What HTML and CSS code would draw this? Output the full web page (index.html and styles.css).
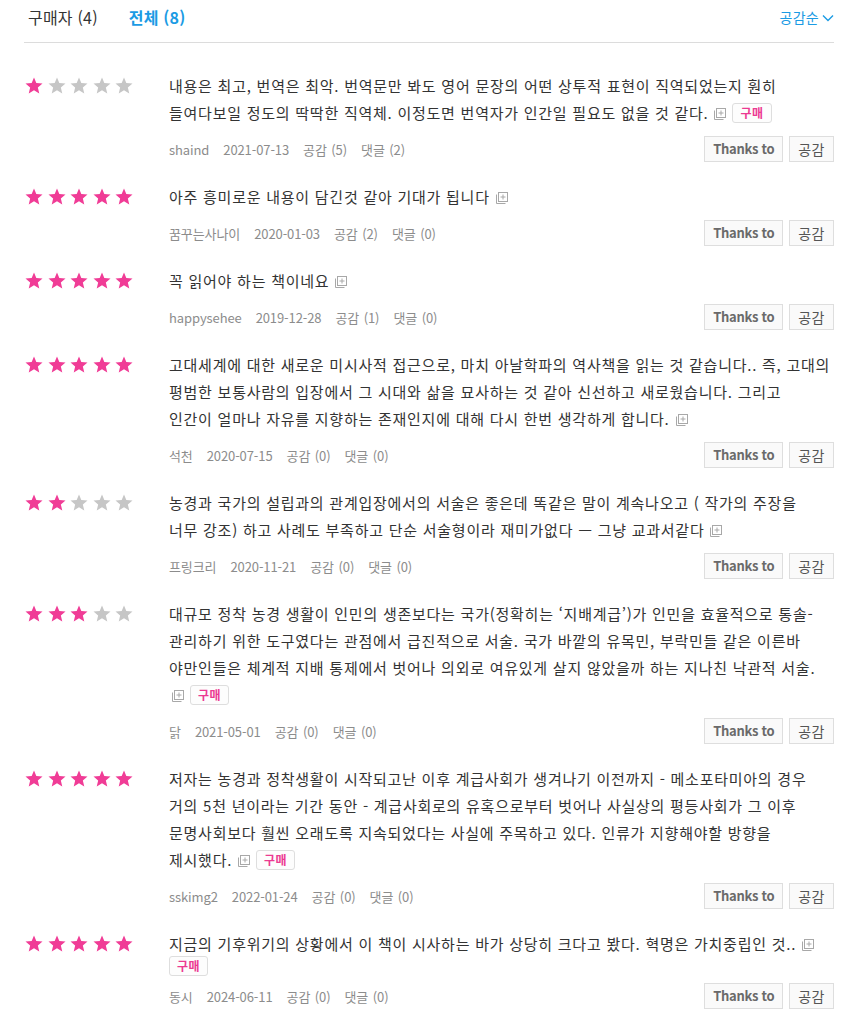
FILE: index.html
```html
<!DOCTYPE html>
<html lang="ko">
<head>
<meta charset="utf-8">
<link rel="stylesheet" href="styles.css">
</head>
<body>
<svg width="0" height="0" class="defs">
  <defs>
    <symbol id="star" viewBox="0 0 20 19">
      <path d="M10 0.5 L12.6 6.6 L19.5 7.2 L14.3 11.7 L15.9 18.4 L10 14.9 L4.1 18.4 L5.7 11.7 L0.5 7.2 L7.4 6.6 Z"/>
    </symbol>
    <symbol id="more" viewBox="0 0 12 12">
      <rect x="2.5" y="0.5" width="9" height="9" fill="#fff" stroke="#a8a8a8"/>
      <path d="M0.5 2.5 V11.5 H9.5" fill="none" stroke="#a8a8a8"/>
      <path d="M7 2.5 V7.5 M4.5 5 H9.5" stroke="#a8a8a8"/>
    </symbol>
  </defs>
</svg>
<div class="page">
  <div class="tabs">
    <div class="tab-group">
      <span class="tab">구매자 (4)</span>
      <span class="tab active">전체 (8)</span>
    </div>
    <span class="sort">공감순 <svg class="chev" viewBox="0 0 12 8"><path d="M1 1.5 L6 6.5 L11 1.5" fill="none" stroke="currentColor" stroke-width="1.4"/></svg></span>
  </div>

  <div class="list">
    <div class="review">
      <div class="stars"><svg class="on"><use href="#star"/></svg><svg><use href="#star"/></svg><svg><use href="#star"/></svg><svg><use href="#star"/></svg><svg><use href="#star"/></svg></div>
      <div class="body">
        <p class="text">내용은 최고, 번역은 최악. 번역문만 봐도 영어 문장의 어떤 상투적 표현이 직역되었는지 훤히<br>들여다보일 정도의 딱딱한 직역체. 이정도면 번역자가 인간일 필요도 없을 것 같다. <svg class="more"><use href="#more"/></svg> <span class="badge">구매</span></p>
        <div class="meta">
          <div class="info"><span>shaind</span><span>2021-07-13</span><span>공감 (5)</span><span>댓글 (2)</span></div>
          <div class="btns"><button class="btn">Thanks to</button><button class="btn btn-like">공감</button></div>
        </div>
      </div>
    </div>

    <div class="review">
      <div class="stars"><svg class="on"><use href="#star"/></svg><svg class="on"><use href="#star"/></svg><svg class="on"><use href="#star"/></svg><svg class="on"><use href="#star"/></svg><svg class="on"><use href="#star"/></svg></div>
      <div class="body">
        <p class="text">아주 흥미로운 내용이 담긴것 같아 기대가 됩니다 <svg class="more"><use href="#more"/></svg></p>
        <div class="meta">
          <div class="info"><span>꿈꾸는사나이</span><span>2020-01-03</span><span>공감 (2)</span><span>댓글 (0)</span></div>
          <div class="btns"><button class="btn">Thanks to</button><button class="btn btn-like">공감</button></div>
        </div>
      </div>
    </div>

    <div class="review">
      <div class="stars"><svg class="on"><use href="#star"/></svg><svg class="on"><use href="#star"/></svg><svg class="on"><use href="#star"/></svg><svg class="on"><use href="#star"/></svg><svg class="on"><use href="#star"/></svg></div>
      <div class="body">
        <p class="text">꼭 읽어야 하는 책이네요 <svg class="more"><use href="#more"/></svg></p>
        <div class="meta">
          <div class="info"><span>happysehee</span><span>2019-12-28</span><span>공감 (1)</span><span>댓글 (0)</span></div>
          <div class="btns"><button class="btn">Thanks to</button><button class="btn btn-like">공감</button></div>
        </div>
      </div>
    </div>

    <div class="review">
      <div class="stars"><svg class="on"><use href="#star"/></svg><svg class="on"><use href="#star"/></svg><svg class="on"><use href="#star"/></svg><svg class="on"><use href="#star"/></svg><svg class="on"><use href="#star"/></svg></div>
      <div class="body">
        <p class="text">고대세계에 대한 새로운 미시사적 접근으로, 마치 아날학파의 역사책을 읽는 것 같습니다.. 즉, 고대의<br>평범한 보통사람의 입장에서 그 시대와 삶을 묘사하는 것 같아 신선하고 새로웠습니다. 그리고<br>인간이 얼마나 자유를 지향하는 존재인지에 대해 다시 한번 생각하게 합니다. <svg class="more"><use href="#more"/></svg></p>
        <div class="meta">
          <div class="info"><span>석천</span><span>2020-07-15</span><span>공감 (0)</span><span>댓글 (0)</span></div>
          <div class="btns"><button class="btn">Thanks to</button><button class="btn btn-like">공감</button></div>
        </div>
      </div>
    </div>

    <div class="review">
      <div class="stars"><svg class="on"><use href="#star"/></svg><svg class="on"><use href="#star"/></svg><svg><use href="#star"/></svg><svg><use href="#star"/></svg><svg><use href="#star"/></svg></div>
      <div class="body">
        <p class="text">농경과 국가의 설립과의 관계입장에서의 서술은 좋은데 똑같은 말이 계속나오고 ( 작가의 주장을<br>너무 강조) 하고 사례도 부족하고 단순 서술형이라 재미가없다 ㅡ 그냥 교과서같다 <svg class="more"><use href="#more"/></svg></p>
        <div class="meta">
          <div class="info"><span>프링크리</span><span>2020-11-21</span><span>공감 (0)</span><span>댓글 (0)</span></div>
          <div class="btns"><button class="btn">Thanks to</button><button class="btn btn-like">공감</button></div>
        </div>
      </div>
    </div>

    <div class="review">
      <div class="stars"><svg class="on"><use href="#star"/></svg><svg class="on"><use href="#star"/></svg><svg class="on"><use href="#star"/></svg><svg><use href="#star"/></svg><svg><use href="#star"/></svg></div>
      <div class="body">
        <p class="text">대규모 정착 농경 생활이 인민의 생존보다는 국가(정확히는 ‘지배계급’)가 인민을 효율적으로 통솔-<br>관리하기 위한 도구였다는 관점에서 급진적으로 서술. 국가 바깥의 유목민, 부락민들 같은 이른바<br>야만인들은 체계적 지배 통제에서 벗어나 의외로 여유있게 살지 않았을까 하는 지나친 낙관적 서술.<br><svg class="more first"><use href="#more"/></svg> <span class="badge">구매</span></p>
        <div class="meta">
          <div class="info"><span>닭</span><span>2021-05-01</span><span>공감 (0)</span><span>댓글 (0)</span></div>
          <div class="btns"><button class="btn">Thanks to</button><button class="btn btn-like">공감</button></div>
        </div>
      </div>
    </div>

    <div class="review">
      <div class="stars"><svg class="on"><use href="#star"/></svg><svg class="on"><use href="#star"/></svg><svg class="on"><use href="#star"/></svg><svg class="on"><use href="#star"/></svg><svg class="on"><use href="#star"/></svg></div>
      <div class="body">
        <p class="text">저자는 농경과 정착생활이 시작되고난 이후 계급사회가 생겨나기 이전까지 - 메소포타미아의 경우<br>거의 5천 년이라는 기간 동안 - 계급사회로의 유혹으로부터 벗어나 사실상의 평등사회가 그 이후<br>문명사회보다 훨씬 오래도록 지속되었다는 사실에 주목하고 있다. 인류가 지향해야할 방향을<br>제시했다. <svg class="more"><use href="#more"/></svg> <span class="badge">구매</span></p>
        <div class="meta">
          <div class="info"><span>sskimg2</span><span>2022-01-24</span><span>공감 (0)</span><span>댓글 (0)</span></div>
          <div class="btns"><button class="btn">Thanks to</button><button class="btn btn-like">공감</button></div>
        </div>
      </div>
    </div>

    <div class="review">
      <div class="stars"><svg class="on"><use href="#star"/></svg><svg class="on"><use href="#star"/></svg><svg class="on"><use href="#star"/></svg><svg class="on"><use href="#star"/></svg><svg class="on"><use href="#star"/></svg></div>
      <div class="body">
        <p class="text">지금의 기후위기의 상황에서 이 책이 시사하는 바가 상당히 크다고 봤다. 혁명은 가치중립인 것.. <svg class="more"><use href="#more"/></svg></p>
        <div class="badge-line"><span class="badge">구매</span></div>
        <div class="meta meta-tight">
          <div class="info"><span>동시</span><span>2024-06-11</span><span>공감 (0)</span><span>댓글 (0)</span></div>
          <div class="btns"><button class="btn">Thanks to</button><button class="btn btn-like">공감</button></div>
        </div>
      </div>
    </div>
  </div>
</div>
</body>
</html>
```

FILE: styles.css
```css
* { box-sizing: border-box; }

html, body {
  margin: 0;
  padding: 0;
  background: #fff;
}

body {
  font-family: "Noto Sans CJK KR", "Noto Sans", sans-serif;
  color: #333;
}

.defs {
  position: absolute;
  width: 0;
  height: 0;
  overflow: hidden;
}

.page {
  width: 810px;
  margin-left: 24px;
}

.tabs {
  display: flex;
  justify-content: space-between;
  align-items: center;
  height: 43px;
  padding-bottom: 8px;
  border-bottom: 1px solid #dcdcdc;
}

.tab-group {
  display: flex;
  gap: 31px;
  padding-left: 4px;
}

.tab {
  font-size: 16px;
  line-height: 20px;
  letter-spacing: 0.2px;
  color: #333;
}

.tab.active {
  color: #1b9be4;
  font-weight: bold;
}

.sort {
  display: flex;
  align-items: center;
  gap: 3px;
  font-size: 14px;
  line-height: 18px;
  letter-spacing: 0.3px;
  color: #1b9be4;
}

.chev {
  width: 12px;
  height: 8px;
  margin-top: 1px;
}

.list {
  padding-top: 8px;
}

.review {
  display: grid;
  grid-template-columns: 145px 1fr;
  padding-top: 21px;
}

.stars {
  display: flex;
  gap: 4.5px;
  height: 27px;
  align-items: center;
  padding-left: 1px;
}

.stars svg {
  width: 18px;
  height: 17px;
  fill: #c6c6c6;
}

.stars svg.on {
  fill: #f03c96;
}

.text {
  margin: 0;
  font-size: 15px;
  line-height: 27px;
  letter-spacing: 0.75px;
  color: #333;
  white-space: nowrap;
}

.more {
  width: 12px;
  height: 12px;
  vertical-align: -1px;
  margin-left: 1px;
}

.more.first {
  margin-left: 3px;
}

.badge {
  display: inline-block;
  height: 20px;
  padding: 0 7px;
  margin-left: 1px;
  border: 1px solid #dedede;
  border-radius: 3px;
  background: #fdfdfd;
  color: #ec3a92;
  font-size: 12px;
  font-weight: bold;
  line-height: 18px;
  letter-spacing: 0.5px;
  vertical-align: 1px;
}

.badge-line {
  height: 20px;
  margin-top: -1px;
  line-height: 20px;
}

.badge-line .badge {
  margin-left: 0;
  vertical-align: top;
}

.meta {
  display: flex;
  justify-content: space-between;
  align-items: center;
  margin-top: 10px;
  height: 26px;
}

.meta-tight {
  margin-top: 7px;
}

.info {
  display: flex;
  gap: 14px;
  font-size: 13px;
  letter-spacing: -0.1px;
  word-spacing: 1px;
  color: #8c8c8c;
}

.btns {
  display: flex;
  gap: 6px;
}

.btn {
  height: 26px;
  padding: 0 8px;
  border: 1px solid #dedede;
  background: #fafafa;
  color: #6a6a6a;
  font-family: "Noto Sans CJK KR", "Noto Sans", sans-serif;
  font-size: 13px;
  font-weight: bold;
  line-height: 24px;
  letter-spacing: -0.3px;
  border-radius: 0;
}

.btn-like {
  padding: 0 8px;
  font-size: 14px;
  font-weight: normal;
  letter-spacing: 0.5px;
  color: #555;
}
```
